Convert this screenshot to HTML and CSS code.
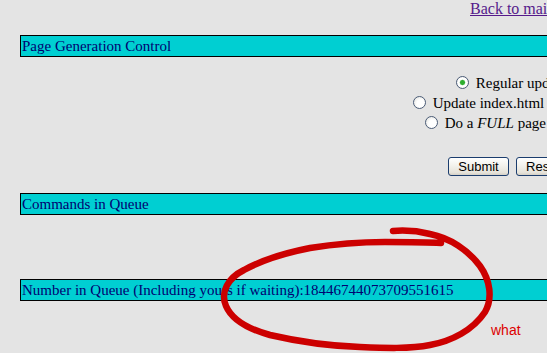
FILE: index.html
```html
<!DOCTYPE html>
<html>
<head>
<meta charset="utf-8">
<link rel="stylesheet" href="styles.css">
</head>
<body>
<div class="page">
  <div class="top"><a class="back" href="#">Back to main page</a></div>
  <div class="bar">Page Generation Control</div>
  <form class="gen">
    <div class="opt"><input type="radio" name="m" class="radio" checked> Regular update</div>
    <div class="opt"><input type="radio" name="m" class="radio"> Update index.html only (fast)</div>
    <div class="opt"><input type="radio" name="m" class="radio"> Do a <i>FULL</i> page rewrites</div>
    <div class="buttons"><button type="button" class="btn">Submit</button><button type="button" class="btn btn-reset">Reset</button></div>
  </form>
  <div class="bar">Commands in Queue</div>
  <div class="bar bar-last">Number in Queue (Including yours if waiting):18446744073709551615</div>
</div>
<svg class="scribble" width="547" height="353" viewBox="0 0 547 353">
  <path d="M393 231 C405 230 418 231 430 234 C450 238 468 250 480 266 C490 280 493 298 485 312 C473 330 452 341 430 345 C410 349 385 348 360 347 C330 346 300 342 270 335 C248 329 232 320 226 306 C220 292 228 278 244 270 C262 260 285 253 310 248 C335 244 360 242 385 242 C405 242 425 242 441 243" fill="none" stroke="#cc0000" stroke-width="6.5" stroke-linecap="round" stroke-linejoin="round"/>
</svg>
<span class="what">what</span>
</body>
</html>
```

FILE: styles.css
```css
html, body {
  margin: 0;
  padding: 0;
  overflow: hidden;
  background: #e4e4e4;
}
body {
  font-family: "Liberation Serif", "Times New Roman", serif;
  font-size: 15px;
  color: #000;
  width: 547px;
  height: 353px;
  position: relative;
}
.page {
  width: 1018px;
}
.top {
  line-height: 18px;
  padding-left: 470px;
  white-space: nowrap;
  font-size: 16px;
}
.back {
  color: #551a8b;
}
.bar {
  margin: 17px 20px 0 20px;
  border: 1px solid #000;
  background: #00cfd2;
  color: #000070;
  line-height: 20px;
  padding-left: 1px;
  white-space: nowrap;
}
.gen {
  margin: 16px 0 0 0;
  text-align: center;
  line-height: 20px;
}
.opt {
  white-space: nowrap;
}
.radio {
  -webkit-appearance: none;
  appearance: none;
  width: 13px;
  height: 13px;
  margin: 0 3px 0 5px;
  border: 1px solid #4b5c77;
  border-radius: 50%;
  background: radial-gradient(circle at 60% 60%, #ffffff 40%, #dcdcd6 100%);
  vertical-align: -1px;
  box-sizing: border-box;
}
.radio:checked {
  background: radial-gradient(circle, #2fae2f 0, #2fae2f 2px, #8fd48f 2.6px, #ffffff 3.2px, #ffffff 4.5px, #dcdcd6 100%);
}
.buttons {
  margin-top: 24px;
  display: flex;
  justify-content: center;
  gap: 7px;
}
.btn {
  font-family: "Liberation Sans", Arial, sans-serif;
  font-size: 13px;
  height: 19px;
  padding: 0 9px;
  width: 61px;
  border: 1px solid #1b3d6e;
  border-radius: 3px;
  background: linear-gradient(#ffffff 0%, #f4f3ee 40%, #e6e3da 85%, #d4d0c6 100%);
  color: #000;
  line-height: 17px;
}
.btn-reset {
  width: 54px;
}
.bar-last {
  margin-top: 64px;
}
.scribble {
  position: absolute;
  left: 0;
  top: 0;
  pointer-events: none;
}
.what {
  position: absolute;
  left: 491px;
  top: 322px;
  font-family: "Liberation Sans", Arial, sans-serif;
  font-size: 14px;
  color: #dd0000;
}
```
